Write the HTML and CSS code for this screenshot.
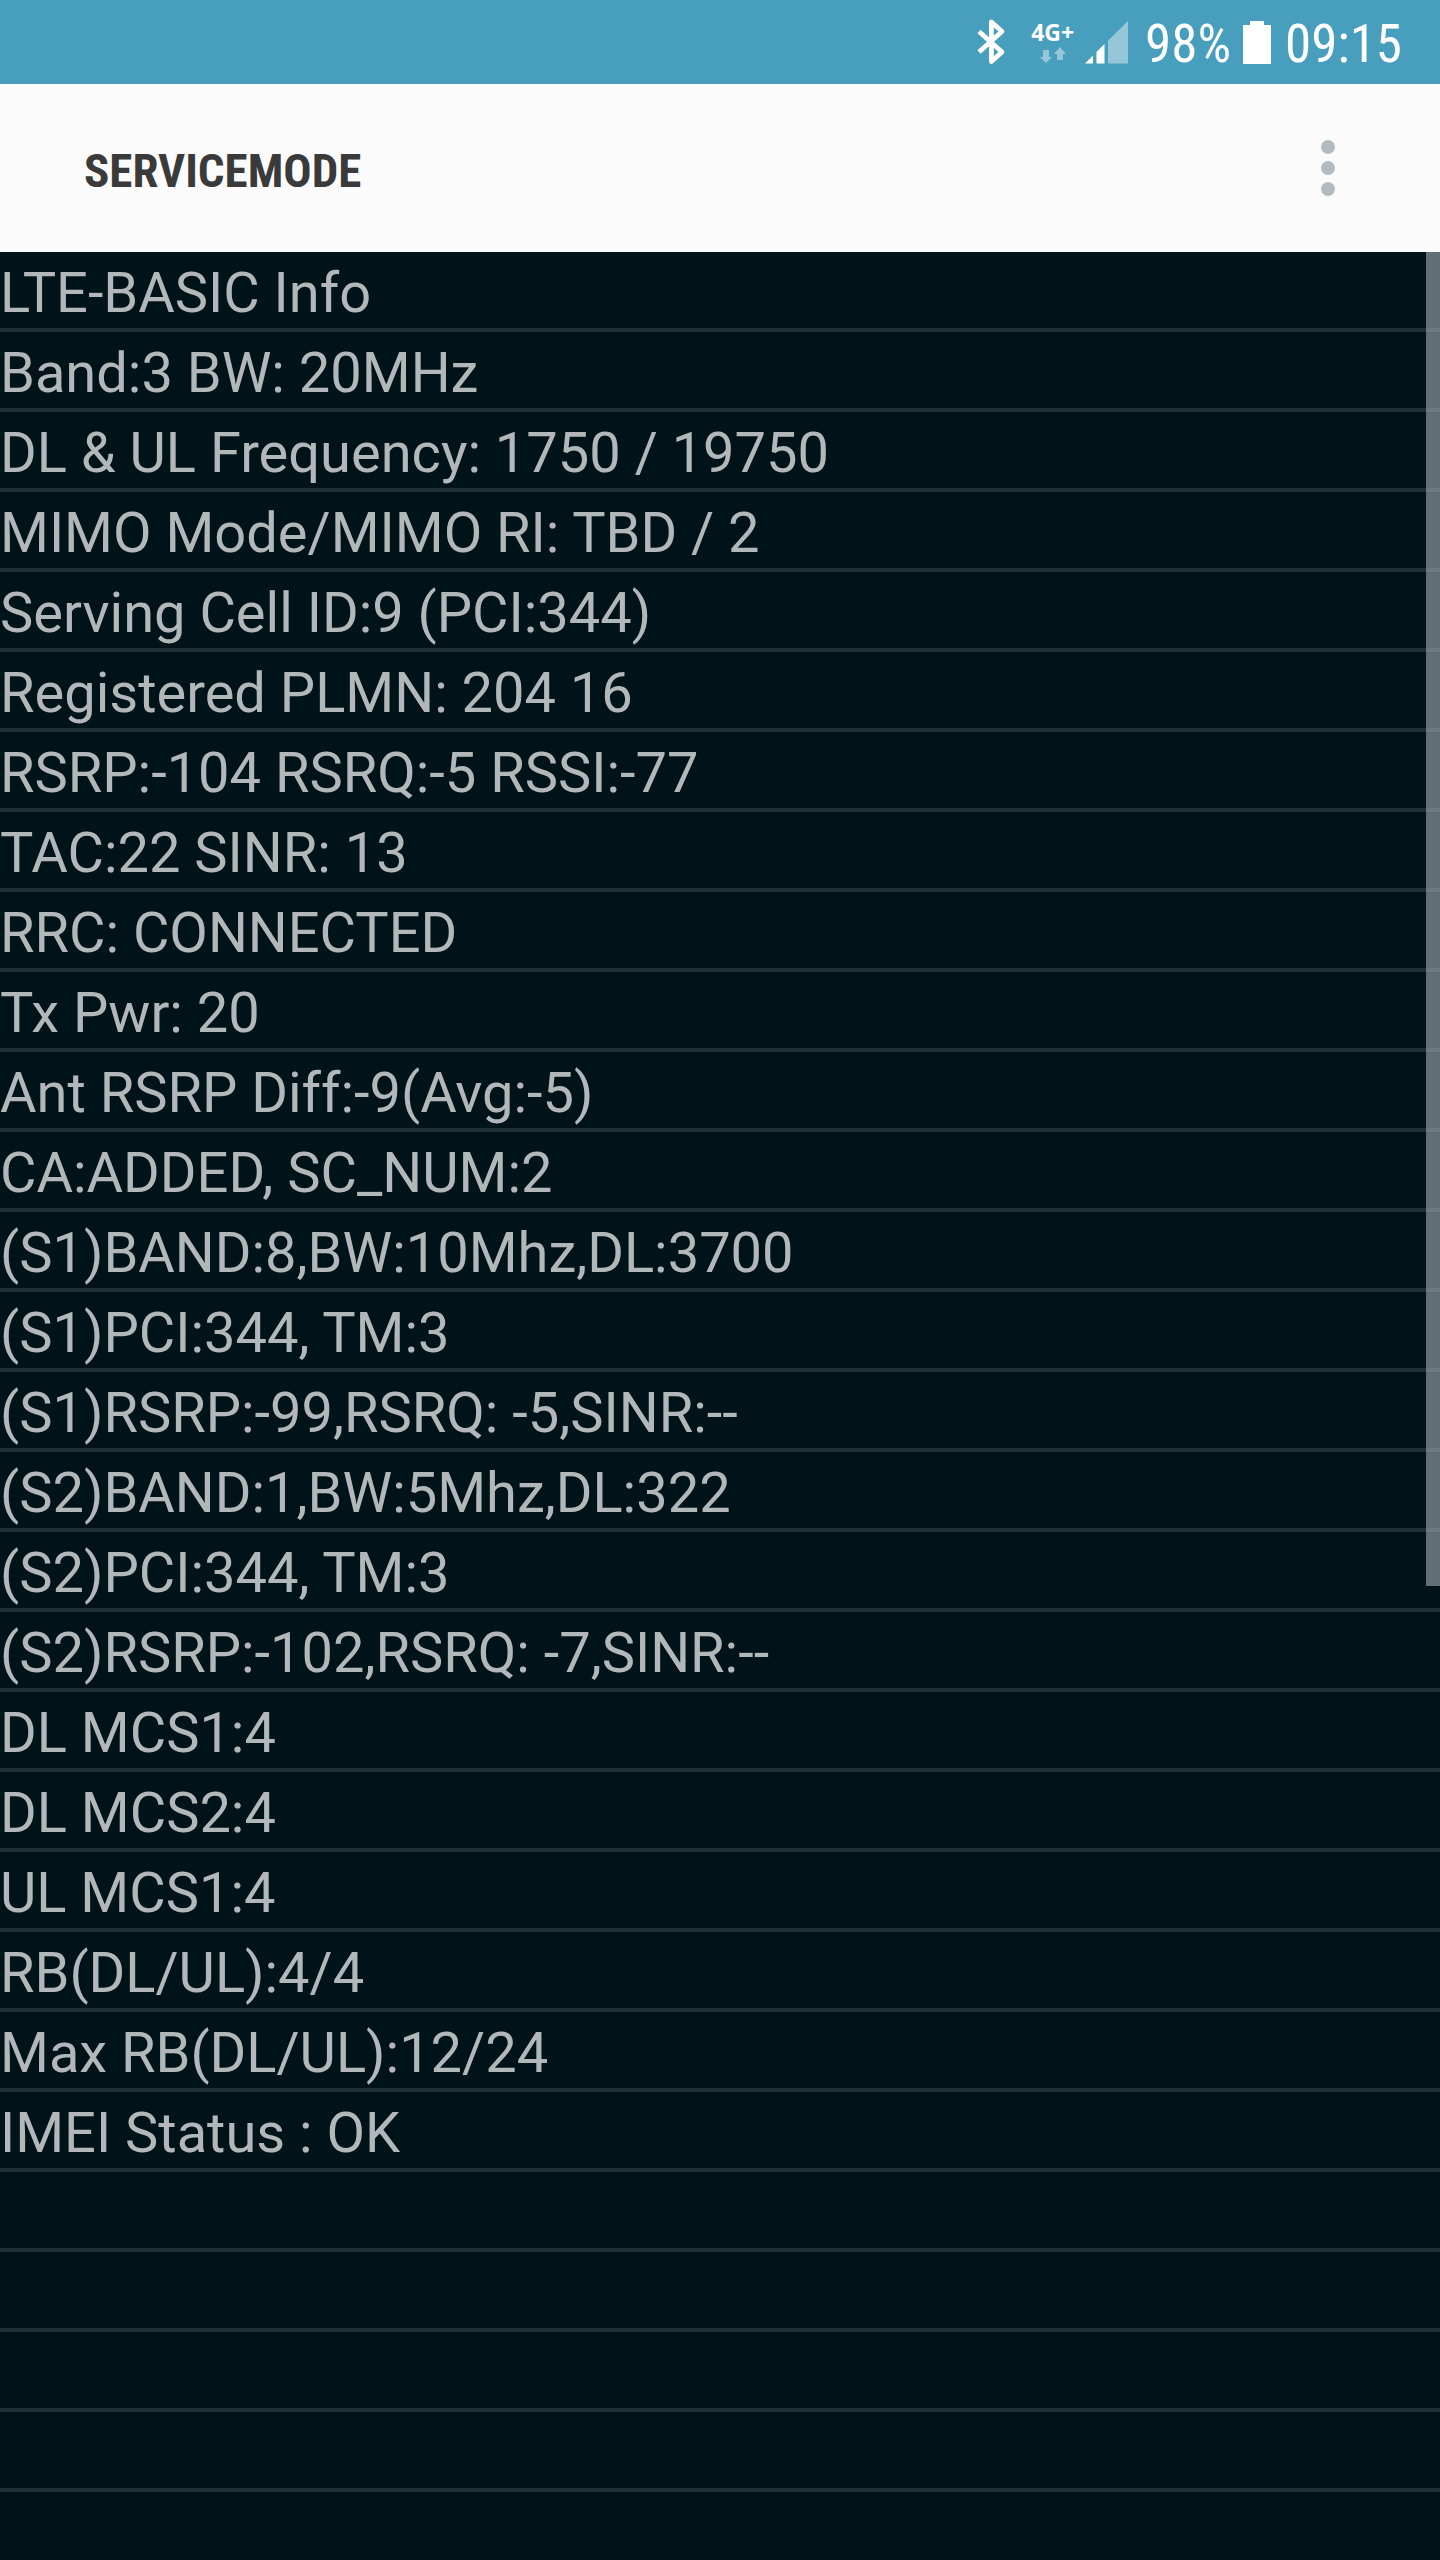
FILE: index.html
```
<!DOCTYPE html>
<html lang="en">

<head>
    <meta charset="UTF-8">
    <meta name="viewport" content="width=device-width, initial-scale=1.0">
    <title>ServiceMode</title>
    <link rel="stylesheet" href="styles.css">
</head>

<body>
    <div class="status-bar">
        <svg class="bluetooth" width="29" height="46" viewBox="0 0 29 46" aria-hidden="true">
            <path d="M2 12.5 L25 33 L14.4 42.5 V3 L25 12.5 L2 33" fill="none" stroke="#fff" stroke-width="4.8" stroke-linejoin="round" />
        </svg>
        <div class="network">
            <span class="network-type">4G+</span>
            <svg width="26" height="17" viewBox="0 0 26 17" aria-hidden="true">
                <path d="M3 3 H9 V10 H12 L6 16 L0 10 H3 Z M17 13 V7 H14 L20 0 L26 7 H23 V13 Z" fill="#96c7d9" />
            </svg>
        </div>
        <svg class="signal" width="43" height="43" viewBox="0 0 43 43" aria-hidden="true">
            <path d="M0 42.5 L8 34.5 V42.5 Z M11.5 31 L19.5 23 V42.5 H11.5 Z" fill="#fff" />
            <path d="M23 19.5 L43 0 V42.5 H23 Z" fill="#96c7d9" />
        </svg>
        <span class="battery-level">98%</span>
        <svg class="battery" width="28" height="43" viewBox="0 0 28 43" aria-hidden="true">
            <path d="M0 4 H7 V0 H21 V4 H28 V43 H0 Z" fill="#fff" />
        </svg>
        <span class="clock">09:15</span>
    </div>

    <header class="title-bar">
        <h1>SERVICEMODE</h1>
        <button type="button" class="menu-btn" aria-label="More options">
            <svg width="14" height="56" viewBox="0 0 14 56" aria-hidden="true">
                <circle cx="7" cy="7" r="7" />
                <circle cx="7" cy="28" r="7" />
                <circle cx="7" cy="49" r="7" />
            </svg>
        </button>
    </header>

    <main class="content">
        <ul class="info-list">
            <li>LTE-BASIC Info</li>
            <li>Band:3 BW: 20MHz</li>
            <li>DL &amp; UL Frequency: 1750 / 19750</li>
            <li>MIMO Mode/MIMO RI: TBD / 2</li>
            <li>Serving Cell ID:9 (PCI:344)</li>
            <li>Registered PLMN: 204 16</li>
            <li>RSRP:-104 RSRQ:-5 RSSI:-77</li>
            <li>TAC:22 SINR: 13</li>
            <li>RRC: CONNECTED</li>
            <li>Tx Pwr: 20</li>
            <li>Ant RSRP Diff:-9(Avg:-5)</li>
            <li>CA:ADDED, SC_NUM:2</li>
            <li>(S1)BAND:8,BW:10Mhz,DL:3700</li>
            <li>(S1)PCI:344, TM:3</li>
            <li>(S1)RSRP:-99,RSRQ: -5,SINR:--</li>
            <li>(S2)BAND:1,BW:5Mhz,DL:322</li>
            <li>(S2)PCI:344, TM:3</li>
            <li>(S2)RSRP:-102,RSRQ: -7,SINR:--</li>
            <li>DL MCS1:4</li>
            <li>DL MCS2:4</li>
            <li>UL MCS1:4</li>
            <li>RB(DL/UL):4/4</li>
            <li>Max RB(DL/UL):12/24</li>
            <li>IMEI Status : OK</li>
            <li></li>
            <li></li>
            <li></li>
            <li></li>
        </ul>
        <div class="scrollbar"></div>
    </main>
</body>

</html>
```

FILE: styles.css
```
* {
    box-sizing: border-box;
}

body {
    display: flex;
    flex-direction: column;
    min-height: 100vh;
    margin: 0;
    background-color: #001319;
    font-family: Roboto, sans-serif;
}

.status-bar {
    display: flex;
    align-items: center;
    justify-content: flex-end;
    height: 84px;
    padding: 0 38px;
    background-color: #489ebd;
    color: #fff;
    font-family: "Roboto Condensed", Roboto, sans-serif;
    font-size: 53px;
    line-height: 62px;
}

.network {
    display: flex;
    flex-direction: column;
    align-items: center;
    gap: 3px;
    margin: 0 11px 0 25px;
}

.network-type {
    font-family: "Open Sans", sans-serif;
    font-size: 23px;
    font-weight: bold;
    line-height: 24px;
}

.battery-level,
.clock {
    padding-top: 4px;
}

.battery-level {
    margin: 0 12px 0 17px;
}

.clock {
    margin-left: 14px;
}

.title-bar {
    display: flex;
    align-items: center;
    justify-content: space-between;
    height: 168px;
    padding: 0 85px 0 84px;
    background-color: #fbfbfb;
}

.title-bar h1 {
    margin: 0;
    padding-top: 4px;
    color: #3a3a3a;
    font-family: "Roboto Condensed", Roboto, sans-serif;
    font-size: 47px;
    font-weight: bold;
}

.menu-btn {
    display: flex;
    padding: 20px;
    border: none;
    background: none;
    cursor: pointer;
}

.menu-btn svg {
    fill: #b0bbc2;
}

.content {
    position: relative;
    flex: 1;
}

.info-list {
    margin: 0;
    padding: 0;
    list-style: none;
    color: #b2b8ba;
    font-size: 56px;
    line-height: 66px;
}

.info-list li {
    min-height: 80px;
    padding: 8px 0 2px;
    border-bottom: 4px solid #1f3138;
}

.scrollbar {
    position: absolute;
    top: 0;
    right: 0;
    width: 14px;
    height: 57.8%;
    background-color: rgba(160, 174, 180, 0.6);
}
```
